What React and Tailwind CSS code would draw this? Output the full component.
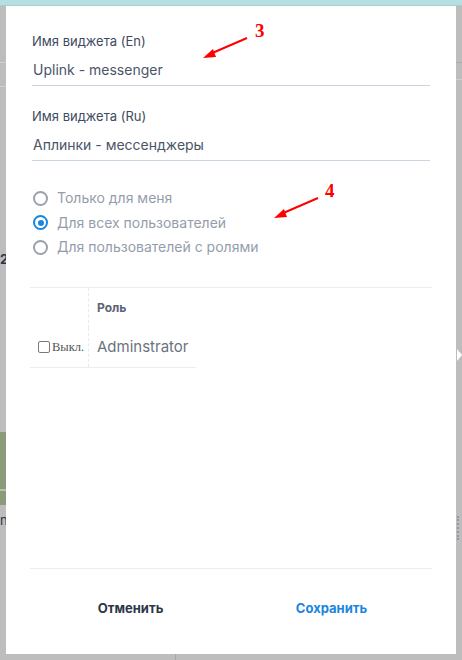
import React from "react";

const font = { fontFamily: "Inter, 'Noto Sans', sans-serif" };

function Radio({ checked, label }) {
  return (
    <div className="flex items-center h-[24.5px]">
      {checked ? (
        <span className="w-[15px] h-[15px] rounded-full border-2 border-[#1a86e0] flex items-center justify-center">
          <span className="w-[6px] h-[6px] rounded-full bg-[#1a86e0]" />
        </span>
      ) : (
        <span className="w-[15px] h-[15px] rounded-full border-2 border-[#9aa1ad]" />
      )}
      <span className="ml-[9px] text-[14px] leading-[20px] text-[#959dab]">{label}</span>
    </div>
  );
}

function Field({ label, value, first }) {
  return (
    <div className={`border-b border-[#cbd4e1] pb-[5px] ${first ? "" : "mt-[21px]"}`}>
      <div className="text-[13px] leading-[18px] text-[#3d4a5e]">{label}</div>
      <div className="mt-[10px] text-[14px] leading-[20px] text-[#4b5568] pl-[1px]">{value}</div>
    </div>
  );
}

export default function App() {
  return (
    <div className="relative w-[462px] h-[660px] overflow-hidden bg-[#bdbdbd]" style={font}>
      {/* page behind the backdrop */}
      <div className="h-[6px] bg-[#b5dfe3] border-b border-[#a6cfd3]" />
      <div className="absolute left-0 top-[62px] w-[6px] h-[1px] bg-[#cfcfcf]" />
      <div className="absolute left-0 top-[86px] w-[6px] h-[1px] bg-[#cfcfcf]" />
      <div className="absolute left-[456px] top-[62px] w-[6px] h-[1px] bg-[#aaaaaa]" />
      <div className="absolute left-[456px] top-[79px] w-[6px] h-[1px] bg-[#cfcfcf]" />
      <div className="absolute left-0 top-[251px] text-[13px] leading-[16px] font-bold text-[#2b3550]">2</div>
      <div className="absolute left-0 top-[432px] w-[6px] h-[73px] bg-[#8b9b7a]" />
      <div className="absolute left-0 top-[489px] w-[6px] h-[2px] bg-[#b9beb1]" />
      <div className="absolute left-0 top-[512px] text-[13px] leading-[16px] text-[#2b3550]">n</div>
      <div className="absolute left-[457px] top-[349px] w-0 h-0 border-y-[6px] border-y-transparent border-l-[5px] border-l-white" />
      <div className="absolute left-[457px] top-[516px] w-[2px] h-[24px] border-l-2 border-dotted border-[#8b9aad]" />
      <div className="absolute left-[175px] top-[654px] w-[1px] h-[6px] bg-[#a8a8a8]" />

      {/* modal */}
      <div className="absolute left-[6px] top-[6px] w-[450px] h-[648px] bg-white flex flex-col px-[26px] pt-[26px]">
        <Field first label="Имя виджета (En)" value="Uplink - messenger" />
        <Field label="Имя виджета (Ru)" value="Аплинки - мессенджеры" />

        <div className="mt-[25px] pl-[1px]">
          <Radio label="Только для меня" />
          <Radio checked label="Для всех пользователей" />
          <Radio label="Для пользователей с ролями" />
        </div>

        <div className="mt-[27px] -mx-[2px] border-t border-[#e9edf3]">
          <div className="w-[166px]">
            <div className="flex h-[40px]">
              <div className="w-[59px] border-r border-dashed border-[#e6e9ee]" />
              <div className="pl-[8px] flex items-center text-[12px] font-bold text-[#5a6578]">Роль</div>
            </div>
            <div className="flex h-[40px] border-b border-[#e9edf3]">
              <div className="w-[59px] border-r border-dashed border-[#e6e9ee] flex items-center pl-[8px]">
                <span className="w-[12px] h-[12px] border border-[#7a7a7a] rounded-[2px]" />
                <span
                  className="ml-[2px] text-[12.5px] text-[#555]"
                  style={{ fontFamily: "'Liberation Serif', serif" }}
                >
                  Выкл.
                </span>
              </div>
              <div className="pl-[8px] flex items-center text-[15px] text-[#6b7280]">Adminstrator</div>
            </div>
          </div>
        </div>

        <div className="mt-auto -mx-[2px] h-[86px] border-t border-[#e9edf3] grid grid-cols-2 pt-[30px]">
          <button className="h-[20px] text-[13px] font-bold text-[#2d3748] text-center">Отменить</button>
          <button className="h-[20px] text-[13px] font-bold text-[#1a86e0] text-center">Сохранить</button>
        </div>
      </div>

      {/* annotations */}
      <svg className="absolute inset-0 pointer-events-none" width="462" height="660">
        <line x1="247" y1="38" x2="210" y2="54" stroke="#ff0000" strokeWidth="2" />
        <polygon points="203,58 213,49 216,57" fill="#ff0000" />
        <line x1="318" y1="198" x2="281" y2="214" stroke="#ff0000" strokeWidth="2" />
        <polygon points="274,218 284,209 287,217" fill="#ff0000" />
      </svg>
      <div
        className="absolute left-[255px] top-[21px] text-[19px] font-bold text-[#ff0000] leading-none"
        style={{ fontFamily: "'Liberation Serif', serif" }}
      >
        3
      </div>
      <div
        className="absolute left-[325px] top-[181px] text-[19px] font-bold text-[#ff0000] leading-none"
        style={{ fontFamily: "'Liberation Serif', serif" }}
      >
        4
      </div>
    </div>
  );
}
